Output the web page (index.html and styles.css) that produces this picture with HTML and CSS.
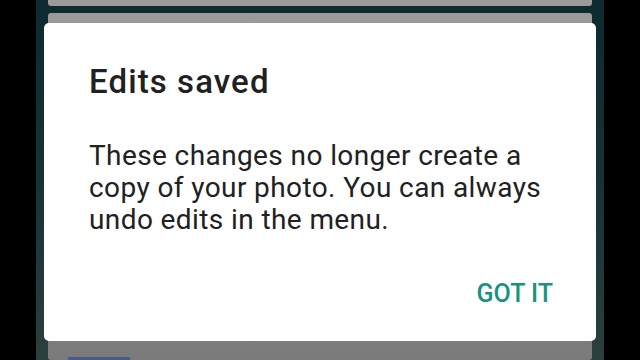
FILE: index.html
```html
<!DOCTYPE html>
<html>
<head>
<meta charset="utf-8">
<link rel="stylesheet" href="styles.css">
</head>
<body>
<div class="screen">
  <div class="card card-top"></div>
  <div class="card card-main">
    <div class="chip"></div>
  </div>
  <div class="dialog">
    <h1 class="title">Edits saved</h1>
    <p class="message">These changes no longer create a copy of your photo. You can always undo edits in the menu.</p>
    <div class="actions"><span class="btn">GOT IT</span></div>
  </div>
</div>
</body>
</html>
```
FILE: styles.css
```css
html, body {
  margin: 0;
  padding: 0;
  background: #000;
  width: 640px;
  height: 360px;
  overflow: hidden;
}
.screen {
  position: relative;
  margin-left: 36px;
  width: 568px;
  height: 360px;
  background: linear-gradient(to bottom, #0d2a31 0%, #173236 50%, #2b403d 100%);
  display: flex;
  flex-direction: column;
  gap: 7px;
  padding: 0 12px;
  box-sizing: border-box;
}
.card {
  background: #9b9b9b;
  border-radius: 3px;
}
.card-top {
  height: 6px;
  border-radius: 0 0 3px 3px;
}
.card-main {
  flex: 1;
  background: linear-gradient(to bottom, #9a9a9a 0%, #8a8a8a 60%, #7a7a7a 100%);
  position: relative;
}
.chip {
  position: absolute;
  left: 20px;
  bottom: 0;
  width: 62px;
  height: 3px;
  background: #4a5a8a;
}
.dialog {
  position: absolute;
  left: 8px;
  top: 23px;
  width: 552px;
  height: 318px;
  background: #fff;
  border-radius: 5px;
  box-sizing: border-box;
  padding: 0 43px 0 45px;
  display: flex;
  flex-direction: column;
  font-family: Roboto, "Noto Sans", sans-serif;
}
.title {
  margin: 40px 0 0 0;
  font-size: 33px;
  line-height: 38px;
  font-weight: 500;
  letter-spacing: 1.1px;
  color: #212121;
}
.message {
  margin: 39px 0 0 0;
  max-width: 455px;
  font-size: 28px;
  line-height: 32px;
  letter-spacing: 0.4px;
  color: #212121;
}
.actions {
  display: flex;
  justify-content: flex-end;
  margin-top: 43px;
}
.btn {
  font-size: 25px;
  font-weight: 500;
  color: #17927f;
  line-height: 30px;
}
```
